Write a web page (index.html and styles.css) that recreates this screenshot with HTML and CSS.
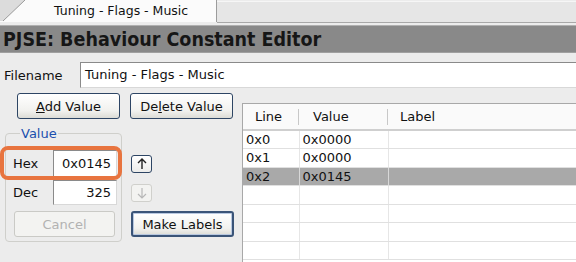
FILE: index.html
```html
<!DOCTYPE html>
<html lang="en">
<head>
    <meta charset="UTF-8">
    <title>PJSE: Behaviour Constant Editor</title>
    <link rel="stylesheet" href="styles.css">
</head>
<body>
    <div class="tabs">
        <div class="tab">
            <svg class="tab-corner" width="26" height="22" viewBox="0 0 26 22">
                <polygon points="0,0 25,0 3,21 0,21" fill="#dcdcdc"/>
                <line x1="3" y1="21" x2="25" y2="0" stroke="#9a9a9a" stroke-width="1"/>
            </svg>
            <span>Tuning - Flags - Music</span>
        </div>
        <div class="tab-rest"></div>
    </div>

    <div class="title">PJSE: Behaviour Constant Editor</div>

    <div class="file-row">
        <span class="label">Filename</span>
        <div class="input file-input">Tuning - Flags - Music</div>
    </div>

    <div class="main">
        <div class="left">
            <div class="btn-row">
                <button class="btn"><u>A</u>dd Value</button>
                <button class="btn">De<u>l</u>ete Value</button>
            </div>
            <div class="lower">
                <fieldset class="group">
                    <legend>Value</legend>
                    <div class="field">
                        <span class="label">Hex</span>
                        <div class="input num">0x0145</div>
                    </div>
                    <div class="field dec">
                        <span class="label">Dec</span>
                        <div class="input num">325</div>
                    </div>
                    <button class="btn cancel" disabled>Cancel</button>
                    <div class="highlight"></div>
                </fieldset>
                <div class="side">
                    <button class="arrow">
                        <svg width="10" height="12" viewBox="0 0 10 12"><path d="M5 11V1M1 5l4-4 4 4" fill="none" stroke="#222" stroke-width="1.4"/></svg>
                    </button>
                    <button class="arrow off" disabled>
                        <svg width="10" height="12" viewBox="0 0 10 12"><path d="M5 1v10M1 7l4 4 4-4" fill="none" stroke="#b8b8b8" stroke-width="1.2"/></svg>
                    </button>
                    <button class="btn default">Make Labels</button>
                </div>
            </div>
        </div>

        <div class="grid">
            <table>
                <thead>
                    <tr><th class="c1">Line</th><th class="c2">Value</th><th>Label</th></tr>
                </thead>
                <tbody>
                    <tr><td>0x0</td><td>0x0000</td><td></td></tr>
                    <tr><td>0x1</td><td>0x0000</td><td></td></tr>
                    <tr class="sel"><td>0x2</td><td>0x0145</td><td></td></tr>
                    <tr><td></td><td></td><td></td></tr>
                    <tr><td></td><td></td><td></td></tr>
                    <tr><td></td><td></td><td></td></tr>
                    <tr><td></td><td></td><td></td></tr>
                </tbody>
            </table>
        </div>
    </div>
</body>
</html>
```

FILE: styles.css
```css
body {
    margin: 0;
    background: #ececec;
    color: #111;
    font-family: "DejaVu Sans", Verdana, sans-serif;
    font-size: 13px;
    width: 576px;
    height: 262px;
    overflow: hidden;
}

/* tab strip */
.tabs {
    display: flex;
    height: 22px;
}

.tab {
    position: relative;
    width: 217px;
    background: #fbfbfb;
    border-right: 1px solid #9c9c9c;
    font-size: 12.5px;
    line-height: 21px;
    padding-left: 54px;
    box-sizing: border-box;
}

.tab-corner {
    position: absolute;
    left: 0;
    top: 0;
}

.tab-rest {
    flex: 1;
    background: #e6e6e6;
    border-top: 1px solid #f6f6f6;
    border-bottom: 1px solid #a8a8a8;
    height: 20px;
    margin-top: 1px;
}

.title {
    margin-top: 3px;
    height: 28px;
    background: #898989;
    border-top: 1px solid #b0b0b0;
    border-bottom: 1px solid #a0a0a0;
    box-sizing: border-box;
    padding-left: 3px;
    font-family: "DejaVu Sans Condensed", "DejaVu Sans", sans-serif;
    font-weight: bold;
    font-size: 19.5px;
    line-height: 27px;
    color: #161616;
}

/* filename */
.file-row {
    display: flex;
    align-items: center;
    margin-top: 9px;
    height: 26px;
}

.file-row .label {
    width: 80px;
    padding-left: 4px;
    box-sizing: border-box;
}

.input {
    background: #fff;
    border: 1px solid #8a8a8a;
    border-right-color: #d8d8d8;
    border-bottom-color: #d8d8d8;
    box-sizing: border-box;
}

.file-input {
    flex: 1;
    height: 26px;
    line-height: 24px;
    padding-left: 4px;
    border-right: none;
}

/* left panel */
.main {
    display: flex;
}

.left {
    width: 242px;
    flex: none;
    padding-top: 5px;
}

.btn-row {
    display: flex;
    gap: 10px;
    padding-left: 17px;
}

.btn {
    width: 103px;
    height: 26px;
    font: inherit;
    color: #111;
    background: linear-gradient(#ffffff, #f1f1ee 70%, #dcdcd6);
    border: 1px solid #2d4564;
    border-radius: 3px;
    padding: 0;
}

.btn.default {
    border: 2px solid #3a5478;
    box-shadow: inset 0 0 0 1px #b8c8e0;
}

.btn:disabled {
    color: #b2b2b2;
    border-color: #cacac6;
    background: #f3f3f1;
}

.lower {
    display: flex;
    margin-top: 9px;
}

.group {
    position: relative;
    width: 117px;
    height: 114px;
    margin: 0 0 0 5px;
    padding: 11px 4px 0 7px;
    box-sizing: border-box;
    border: 1px solid #cfcfcb;
    border-radius: 4px;
}

.group legend {
    color: #1a4fae;
    padding: 0 1px;
    margin-left: 7px;
    line-height: 11px;
}

.field {
    display: flex;
    align-items: center;
}

.field .label {
    width: 40px;
}

.num {
    width: 64px;
    height: 27px;
    line-height: 25px;
    text-align: right;
    padding-right: 5px;
}

.field.dec {
    margin-top: 3px;
}

.field.dec .num {
    height: 25px;
    line-height: 23px;
}

.cancel {
    width: 101px;
    margin-top: 6px;
    margin-left: 1px;
}

/* orange annotation over the hex row */
.highlight {
    position: absolute;
    left: -6px;
    top: 7px;
    width: 122px;
    height: 34px;
    border: 4px solid #e8743f;
    border-radius: 8px;
    box-sizing: border-box;
}

.side {
    display: flex;
    flex-direction: column;
    align-items: flex-start;
    margin-left: 9px;
    padding-top: 27px;
}

.arrow {
    width: 21px;
    height: 18px;
    padding: 0;
    display: flex;
    align-items: center;
    justify-content: center;
    background: linear-gradient(#ffffff, #ececea);
    border: 1px solid #2d4564;
    border-radius: 3px;
}

.arrow.off {
    margin-top: 11px;
    border-color: #d0d0cc;
    background: #f3f3f1;
}

.side .btn {
    margin-top: 9px;
}

/* list view */
.grid {
    flex: 1;
    margin-top: 15px;
    background: #fff;
    border-top: 1px solid #a8a8a8;
    border-left: 1px solid #a8a8a8;
    height: 160px;
    overflow: hidden;
}

.grid table {
    width: 100%;
    border-collapse: collapse;
}

.grid th {
    height: 26px;
    text-align: left;
    font-weight: normal;
    padding: 0 0 0 12px;
    border-bottom: 2px solid #cfcfcf;
    background: #fafafa;
    box-sizing: border-box;
    position: relative;
}

.grid th.c1 {
    width: 56px;
}

.grid th.c2 {
    width: 89px;
    padding-left: 14px;
}

.grid th.c1::after,
.grid th.c2::after {
    content: "";
    position: absolute;
    right: 0;
    top: 5px;
    height: 16px;
    border-right: 1px solid #c8c8c8;
}

.grid td {
    height: 18.5px;
    padding: 0 0 0 3px;
    border-bottom: 1px solid #e0e0e0;
    border-right: 1px solid #e6e6e6;
    box-sizing: border-box;
    line-height: 17px;
}

.grid td:last-child {
    border-right: none;
}

.grid tr.sel td {
    background: #a9a9a9;
    border-right-color: #d8d8d8;
}
```
